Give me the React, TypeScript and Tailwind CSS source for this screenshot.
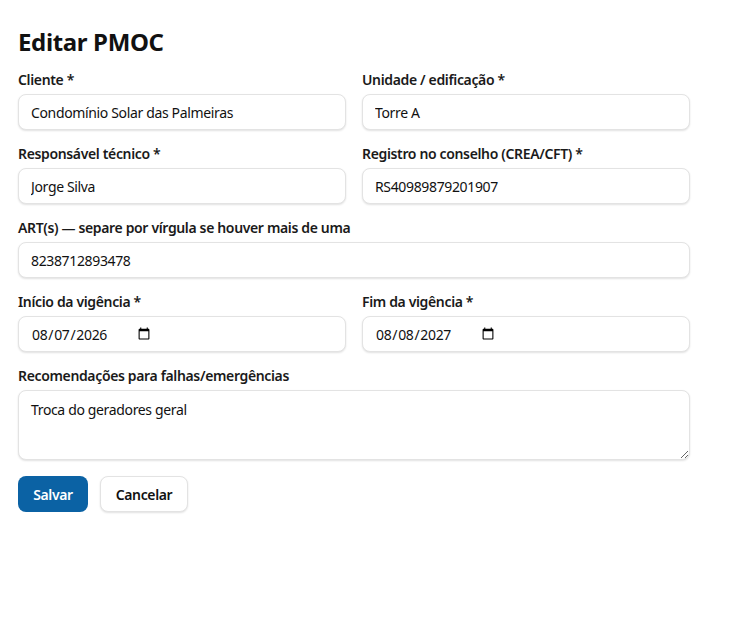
import { useState } from 'react';

function Field({ label, children }: { label: string; children: React.ReactNode }) {
  return (
    <label className="flex flex-col gap-[4px]">
      <span className="text-[14px] leading-[20px] font-semibold text-[#1a1a1a]">{label}</span>
      {children}
    </label>
  );
}

const inputCls =
  'h-[36px] w-full rounded-[8px] border border-[#e3e3e3] bg-white px-[12px] text-[14px] text-[#111] shadow-[0_1px_2px_rgba(0,0,0,0.12)] outline-none';

const dateCls =
  inputCls +
  ' [&::-webkit-datetime-edit]:flex-none [&::-webkit-datetime-edit]:grow-0 [&::-webkit-calendar-picker-indicator]:ml-0 [&::-webkit-calendar-picker-indicator]:mr-auto';

export default function App() {
  const [form, setForm] = useState({
    cliente: 'Condomínio Solar das Palmeiras',
    unidade: 'Torre A',
    responsavel: 'Jorge Silva',
    registro: 'RS40989879201907',
    art: '8238712893478',
    inicio: '2026-08-07',
    fim: '2027-08-08',
    recomendacoes: 'Troca do geradores geral',
  });

  const set = (k: keyof typeof form) => (e: React.ChangeEvent<HTMLInputElement | HTMLTextAreaElement>) =>
    setForm({ ...form, [k]: e.target.value });

  return (
    <div className="min-h-screen bg-white font-['Noto_Sans',sans-serif] tracking-[-0.022em] text-[#111]">
      <div className="w-[672px] ml-[18px] pt-[26px]">
        <h1 className="text-[24px] leading-[32px] font-bold mb-[12px]">Editar PMOC</h1>

        <div className="grid grid-cols-2 gap-x-[16px] gap-y-[14px]">
          <Field label="Cliente *">
            <input className={inputCls} value={form.cliente} onChange={set('cliente')} />
          </Field>
          <Field label="Unidade / edificação *">
            <input className={inputCls} value={form.unidade} onChange={set('unidade')} />
          </Field>
          <Field label="Responsável técnico *">
            <input className={inputCls} value={form.responsavel} onChange={set('responsavel')} />
          </Field>
          <Field label="Registro no conselho (CREA/CFT) *">
            <input className={inputCls} value={form.registro} onChange={set('registro')} />
          </Field>
          <div className="col-span-2">
            <Field label="ART(s) — separe por vírgula se houver mais de uma">
              <input className={inputCls} value={form.art} onChange={set('art')} />
            </Field>
          </div>
          <Field label="Início da vigência *">
            <input type="date" className={dateCls} value={form.inicio} onChange={set('inicio')} />
          </Field>
          <Field label="Fim da vigência *">
            <input type="date" className={dateCls} value={form.fim} onChange={set('fim')} />
          </Field>
          <div className="col-span-2">
            <Field label="Recomendações para falhas/emergências">
              <textarea
                className="h-[70px] w-full rounded-[8px] border border-[#e3e3e3] bg-white px-[12px] py-[8px] text-[14px] text-[#111] shadow-[0_1px_2px_rgba(0,0,0,0.12)] outline-none"
                value={form.recomendacoes}
                onChange={set('recomendacoes')}
              />
            </Field>
          </div>
        </div>

        <div className="mt-[16px] flex gap-[12px]">
          <button className="h-[36px] w-[70px] rounded-[8px] bg-[#0b62a4] text-[14px] font-semibold text-white">
            Salvar
          </button>
          <button className="h-[36px] w-[88px] rounded-[8px] border border-[#e3e3e3] bg-white text-[14px] font-semibold text-[#111] shadow-[0_1px_2px_rgba(0,0,0,0.12)]">
            Cancelar
          </button>
        </div>
      </div>
    </div>
  );
}
